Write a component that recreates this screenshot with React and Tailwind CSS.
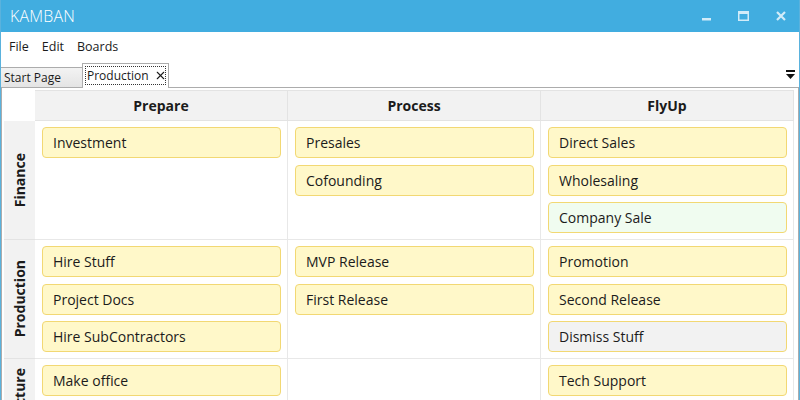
import { X } from 'lucide-react'

const COLUMNS = ['Prepare', 'Process', 'FlyUp']

const ROWS = [
  {
    name: 'Finance',
    cells: [
      [{ t: 'Investment' }],
      [{ t: 'Presales' }, { t: 'Cofounding' }],
      [{ t: 'Direct Sales' }, { t: 'Wholesaling' }, { t: 'Company Sale', kind: 'green' }],
    ],
  },
  {
    name: 'Production',
    cells: [
      [{ t: 'Hire Stuff' }, { t: 'Project Docs' }, { t: 'Hire SubContractors' }],
      [{ t: 'MVP Release' }, { t: 'First Release' }],
      [{ t: 'Promotion' }, { t: 'Second Release' }, { t: 'Dismiss Stuff', kind: 'gray' }],
    ],
  },
  {
    name: 'Infrastructure',
    cells: [[{ t: 'Make office' }], [], [{ t: 'Tech Support' }]],
  },
]

const cardBg = {
  yellow: 'bg-[#fff8c9]',
  green: 'bg-[#f0fcf0]',
  gray: 'bg-[#f2f2f2]',
}

function Card({ t, kind = 'yellow' }) {
  return (
    <div className={`h-[31px] flex items-center pl-[10px] rounded-[4px] border border-[#f2d873] text-[14px] text-[#1b1b1b] ${cardBg[kind]}`}>
      {t}
    </div>
  )
}

export default function App() {
  return (
    <div className="w-[800px] h-[400px] overflow-hidden bg-white flex flex-col border-x border-[#5ab2dd] font-['Open_Sans','Noto_Sans',sans-serif]">
      {/* title bar */}
      <div className="h-[32px] shrink-0 bg-[#41ade0] flex items-center justify-between pl-[9px] pr-[13px]">
        <span className="text-[16px] font-light text-white tracking-[0.2px]">KAMBAN</span>
        <div className="flex items-center gap-[27px] text-[#d2ecf9]">
          <svg width="9" height="10" viewBox="0 0 9 10"><rect x="0" y="7" width="9" height="2.5" fill="currentColor" /></svg>
          <svg width="11" height="10" viewBox="0 0 11 10"><rect x="0.75" y="0.75" width="9.5" height="8.5" fill="none" stroke="currentColor" strokeWidth="1.5" /><rect x="0" y="0" width="11" height="3" fill="currentColor" /></svg>
          <svg width="10" height="10" viewBox="0 0 10 10"><path d="M1 1L9 9M9 1L1 9" stroke="currentColor" strokeWidth="2.2" /></svg>
        </div>
      </div>

      {/* menu */}
      <div className="h-[30px] shrink-0 flex items-center gap-[13px] pl-[8px] text-[12.5px] text-[#1b1b1b]">
        <span>File</span>
        <span>Edit</span>
        <span>Boards</span>
      </div>

      {/* tabs */}
      <div className="h-[26px] shrink-0 flex items-end border-b border-[#acacac]">
        <div className="h-[20px] w-[83px] flex items-center pl-[3px] text-[12px] text-[#1b1b1b] border border-b-0 border-[#acacac] bg-gradient-to-b from-[#f3f3f3] to-[#e4e4e4] -ml-px">
          Start Page
        </div>
        <div className="h-[25px] w-[87px] -ml-px bg-white border border-[#acacac] border-b-0 mb-[-1px] p-[2px] pb-[3px]">
          <div className="h-full border border-dotted border-[#333] flex items-center pl-[1px] gap-[5px] text-[12px] text-[#1b1b1b] whitespace-nowrap">
            Production
            <X className="shrink-0" size={13} strokeWidth={2} />
          </div>
        </div>
        <div className="flex-1" />
        <svg className="mb-[7px] mr-[4px]" width="9" height="10" viewBox="0 0 9 10">
          <rect x="0" y="0" width="9" height="2" fill="#111" />
          <path d="M0 4H9L4.5 9Z" fill="#111" />
        </svg>
      </div>

      {/* board */}
      <div className="flex-1 min-h-0 overflow-hidden border-x border-[#acacac] pl-[2px] pt-[2px]">
        <div className="grid grid-cols-[31px_253px_253px_253px] text-[#1b1b1b]">
          <div className="h-[31px] bg-white" />
          {COLUMNS.map(c => (
            <div key={c} className="h-[31px] bg-[#f2f2f2] border-r border-y border-[#e3e3e3] flex items-center justify-center text-[14px] font-bold">
              {c}
            </div>
          ))}
          {ROWS.map(r => (
            <div key={r.name} className="contents">
              <div className="bg-[#f2f2f2] border-b border-[#e3e3e3] min-h-[119px] flex items-center justify-center">
                <span className="[writing-mode:vertical-rl] rotate-180 text-[14px] font-bold whitespace-nowrap">{r.name}</span>
              </div>
              {r.cells.map((cards, i) => (
                <div key={i} className="border-r border-b border-[#e8e8e8] pt-[6px] pb-[6px] pl-[7px] pr-[6px] flex flex-col gap-[6.5px] min-h-[119px]">
                  {cards.map(c => <Card key={c.t} {...c} />)}
                </div>
              ))}
            </div>
          ))}
        </div>
      </div>
    </div>
  )
}
